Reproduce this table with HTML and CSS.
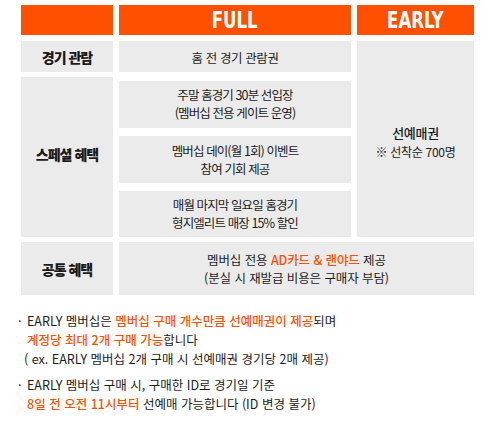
FILE: index.html
```html
<!DOCTYPE html>
<html lang="ko">
<head>
<meta charset="utf-8">
<link rel="stylesheet" href="styles.css">
</head>
<body>
<div class="table">
  <div class="head head-blank"></div>
  <div class="head"><span class="head-text">FULL</span></div>
  <div class="head"><span class="head-text">EARLY</span></div>

  <div class="cell label">경기 관람</div>
  <div class="cell body wide">홈 전 경기 관람권</div>
  <div class="cell early">
    <div class="early-main">선예매권</div>
    <div class="early-sub">※ 선착순 700명</div>
  </div>

  <div class="cell label label-special">스페셜 혜택</div>
  <div class="subs">
    <div class="cell sub sub-a">
      <div>주말 홈경기 30분 선입장</div>
      <div>(멤버십 전용 게이트 운영)</div>
    </div>
    <div class="cell sub sub-b">
      <div>멤버십 데이(월 1회) 이벤트</div>
      <div>참여 기회 제공</div>
    </div>
    <div class="cell sub sub-c">
      <div>매월 마지막 일요일 홈경기</div>
      <div>형지엘리트 매장 15% 할인</div>
    </div>
  </div>

  <div class="cell label">공통 혜택</div>
  <div class="cell common">
    <div>멤버십 전용 <span class="accent">AD카드 &amp; 랜야드</span> 제공</div>
    <div>(분실 시 재발급 비용은 구매자 부담)</div>
  </div>
</div>

<div class="notes">
  <div class="note">
    <div class="line"><span class="dot">·</span>EARLY 멤버십은 <span class="hl">멤버십 구매 개수만큼 선예매권이 제공</span>되며</div>
    <div class="line"><span class="hl">계정당 최대 2개 구매 가능</span>합니다</div>
    <div class="line line-ex">( ex. EARLY 멤버십 2개 구매 시 선예매권 경기당 2매 제공)</div>
  </div>
  <div class="note">
    <div class="line"><span class="dot">·</span>EARLY 멤버십 구매 시, 구매한 ID로 경기일 기준</div>
    <div class="line"><span class="hl">8일 전 오전 11시부터</span> 선예매 가능합니다 (ID 변경 불가)</div>
  </div>
</div>
</body>
</html>
```

FILE: styles.css
```css
html, body {
  margin: 0;
  padding: 0;
  background: #ffffff;
}

body {
  font-family: "Noto Sans CJK KR", "Noto Sans", sans-serif;
  color: #1c1c1c;
}

.table {
  display: grid;
  grid-template-columns: 92px 232px 117px;
  grid-template-rows: 31px 31px 160px 53px;
  column-gap: 6px;
  row-gap: 5px;
  margin: 5px 0 0 21px;
  width: 453px;
}

.head {
  height: 30px;
  background: #ff5000;
  display: flex;
  align-items: center;
  justify-content: center;
}

.head-text {
  display: inline-block;
  color: #ffffff;
  font-family: "Liberation Sans Narrow", "DejaVu Sans Condensed", sans-serif;
  font-weight: 700;
  font-size: 23px;
  line-height: 30px;
  transform: scaleX(0.8);
}

.cell {
  background: #ebebeb;
  display: flex;
  flex-direction: column;
  align-items: center;
  justify-content: center;
  text-align: center;
}

.label {
  font-weight: 900;
  font-size: 14px;
  letter-spacing: -1px;
  color: #1a1a1a;
}

.label-special {
  padding-bottom: 6px;
  box-sizing: border-box;
}

.body {
  font-size: 12.5px;
  letter-spacing: -0.4px;
  padding-top: 1px;
}

.early {
  grid-row: 2 / 4;
  grid-column: 3;
  padding-top: 6px;
  box-sizing: border-box;
}

.early-main {
  font-size: 13px;
  font-weight: 500;
  letter-spacing: -0.3px;
  line-height: 19px;
  color: #1a1a1a;
}

.early-sub {
  font-size: 12px;
  letter-spacing: -0.3px;
  line-height: 19px;
}

.subs {
  display: flex;
  flex-direction: column;
  gap: 8px;
  padding-top: 4px;
}

.sub {
  font-size: 12.5px;
  letter-spacing: -0.9px;
  line-height: 18px;
}

.sub-a { height: 47px; }
.sub-b { height: 48px; }
.sub-c { height: 46px; }

.common {
  grid-column: 2 / 4;
  font-size: 12.5px;
  line-height: 18px;
  letter-spacing: -0.1px;
}

.accent {
  color: #ff5000;
  font-weight: 500;
}

.notes {
  margin: 16px 0 0 0;
  font-size: 12.5px;
  line-height: 19px;
}

.note + .note {
  margin-top: 7px;
}

.line {
  padding-left: 27px;
  position: relative;
  white-space: nowrap;
}

.line-ex {
  padding-left: 24px;
}

.dot {
  position: absolute;
  left: 18px;
  top: 0;
}

.hl {
  color: #ff5000;
  font-weight: 500;
}
```
